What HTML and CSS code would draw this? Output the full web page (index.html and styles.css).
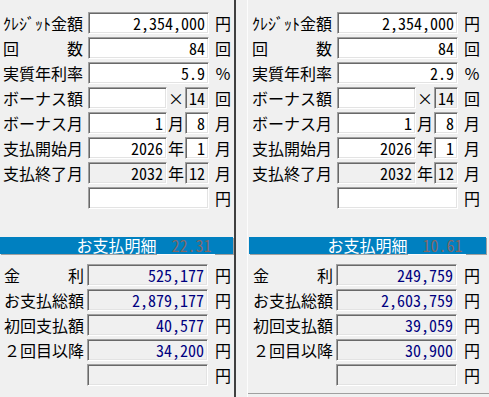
FILE: index.html
```html
<!DOCTYPE html>
<html lang="ja">
<head>
  <meta charset="UTF-8" />
  <title>ローン計算</title>
  <link rel="stylesheet" href="styles.css">
</head>
<body>
  <div class="window">
    <section class="panel">
      <div class="inputs">
        <div class="row">
          <span class="label">ｸﾚｼﾞｯﾄ金額</span>
          <span class="box wide">2,354,000</span>
          <span class="unit">円</span>
        </div>
        <div class="row">
          <span class="label">回　　　数</span>
          <span class="box wide">84</span>
          <span class="unit">回</span>
        </div>
        <div class="row">
          <span class="label">実質年利率</span>
          <span class="box wide">5.9</span>
          <span class="unit">％</span>
        </div>
        <div class="row">
          <span class="label">ボーナス額</span>
          <span class="box short"></span>
          <span class="mid">×</span>
          <span class="box tiny off">14</span>
          <span class="unit">回</span>
        </div>
        <div class="row">
          <span class="label">ボーナス月</span>
          <span class="box short">1</span>
          <span class="mid">月</span>
          <span class="box tiny">8</span>
          <span class="unit">月</span>
        </div>
        <div class="row">
          <span class="label">支払開始月</span>
          <span class="box short">2026</span>
          <span class="mid">年</span>
          <span class="box tiny">1</span>
          <span class="unit">月</span>
        </div>
        <div class="row">
          <span class="label">支払終了月</span>
          <span class="box short off">2032</span>
          <span class="mid">年</span>
          <span class="box tiny off">12</span>
          <span class="unit">月</span>
        </div>
        <div class="row">
          <span class="label"></span>
          <span class="box wide"></span>
          <span class="unit">円</span>
        </div>
      </div>

      <div class="bar">
        <span class="bar-title">お支払明細</span>
        <span class="bar-rate">22.31</span>
      </div>

      <div class="results">
        <div class="row">
          <span class="label">金　　　利</span>
          <span class="box out">525,177</span>
          <span class="unit">円</span>
        </div>
        <div class="row">
          <span class="label">お支払総額</span>
          <span class="box out">2,879,177</span>
          <span class="unit">円</span>
        </div>
        <div class="row">
          <span class="label">初回支払額</span>
          <span class="box out">40,577</span>
          <span class="unit">円</span>
        </div>
        <div class="row">
          <span class="label">２回目以降</span>
          <span class="box out">34,200</span>
          <span class="unit">円</span>
        </div>
        <div class="row">
          <span class="label"></span>
          <span class="box out"></span>
          <span class="unit">円</span>
        </div>
      </div>
    </section>

    <div class="divider"></div>

    <section class="panel right">
      <div class="inputs">
        <div class="row">
          <span class="label">ｸﾚｼﾞｯﾄ金額</span>
          <span class="box wide">2,354,000</span>
          <span class="unit">円</span>
        </div>
        <div class="row">
          <span class="label">回　　　数</span>
          <span class="box wide">84</span>
          <span class="unit">回</span>
        </div>
        <div class="row">
          <span class="label">実質年利率</span>
          <span class="box wide">2.9</span>
          <span class="unit">％</span>
        </div>
        <div class="row">
          <span class="label">ボーナス額</span>
          <span class="box short"></span>
          <span class="mid">×</span>
          <span class="box tiny off">14</span>
          <span class="unit">回</span>
        </div>
        <div class="row">
          <span class="label">ボーナス月</span>
          <span class="box short">1</span>
          <span class="mid">月</span>
          <span class="box tiny">8</span>
          <span class="unit">月</span>
        </div>
        <div class="row">
          <span class="label">支払開始月</span>
          <span class="box short">2026</span>
          <span class="mid">年</span>
          <span class="box tiny">1</span>
          <span class="unit">月</span>
        </div>
        <div class="row">
          <span class="label">支払終了月</span>
          <span class="box short off">2032</span>
          <span class="mid">年</span>
          <span class="box tiny off">12</span>
          <span class="unit">月</span>
        </div>
        <div class="row">
          <span class="label"></span>
          <span class="box wide"></span>
          <span class="unit">円</span>
        </div>
      </div>

      <div class="bar">
        <span class="bar-title">お支払明細</span>
        <span class="bar-rate">10.61</span>
      </div>

      <div class="results">
        <div class="row">
          <span class="label">金　　　利</span>
          <span class="box out">249,759</span>
          <span class="unit">円</span>
        </div>
        <div class="row">
          <span class="label">お支払総額</span>
          <span class="box out">2,603,759</span>
          <span class="unit">円</span>
        </div>
        <div class="row">
          <span class="label">初回支払額</span>
          <span class="box out">39,059</span>
          <span class="unit">円</span>
        </div>
        <div class="row">
          <span class="label">２回目以降</span>
          <span class="box out">30,900</span>
          <span class="unit">円</span>
        </div>
        <div class="row">
          <span class="label"></span>
          <span class="box out"></span>
          <span class="unit">円</span>
        </div>
      </div>
    </section>
  </div>
</body>
</html>
```

FILE: styles.css
```css
body {
  margin: 0;
  background: #f0f0f0;
  font-family: "Noto Sans Mono CJK JP", "Noto Sans CJK JP", "DejaVu Sans Mono", monospace;
  font-size: 16px;
  color: #000;
  overflow: hidden;
}

.window {
  display: flex;
  height: 397px;
}

.panel {
  width: 234px;
  flex: 0 0 234px;
}

.panel.right {
  width: 240px;
  flex: 0 0 240px;
  padding-left: 1px;
  height: 393px;
  border-bottom: 1px solid #a0a0a0;
}

.divider {
  width: 11px;
  flex: 0 0 11px;
  border-left: 2px solid #404040;
  border-right: 1px solid #fcfcfc;
}

.inputs {
  padding-top: 11px;
  margin-bottom: 26px;
}

.row {
  display: flex;
  align-items: flex-start;
  height: 25px;
}

.label {
  width: 85px;
  padding-left: 3px;
  line-height: 24px;
  white-space: pre;
}

.box {
  box-sizing: border-box;
  height: 22px;
  margin-top: 1px;
  padding-right: 3px;
  line-height: 20px;
  text-align: right;
  background: #fff;
  border: 1px solid;
  border-color: #a0a0a0 #fff #fff #a0a0a0;
  box-shadow: inset 1px 1px 0 #696969, inset -1px -1px 0 #e3e3e3;
}

.box.wide {
  width: 121px;
}

.box.short {
  width: 79px;
}

.box.tiny {
  width: 24px;
}

.box.off {
  background: #f0f0f0;
}

.mid {
  width: 18px;
  padding-left: 1px;
  box-sizing: border-box;
  line-height: 24px;
}

.unit {
  margin-left: 6px;
  width: 16px;
  line-height: 24px;
}

.bar {
  display: grid;
  grid-template-columns: 1fr auto 1fr;
  height: 17px;
  line-height: 17px;
  margin-right: 1px;
  background: #0080c0;
  color: #fff;
  box-shadow: 1px 1px 0 #a0a0a0;
}

.panel.right .bar {
  margin-right: 3px;
}

.bar-title {
  grid-column: 2;
}

.bar-rate {
  justify-self: start;
  width: 58px;
  box-sizing: border-box;
  padding-right: 3px;
  text-align: right;
  color: #806868;
  box-shadow: 0 1px 0 #fafafa;
}

.results {
  padding-top: 9px;
}

.results .label {
  width: 83px;
  padding-left: 4px;
}

.box.out {
  width: 121px;
  background: #f0f0f0;
  color: #000080;
}

.results .unit {
  margin-left: 7px;
}
```
